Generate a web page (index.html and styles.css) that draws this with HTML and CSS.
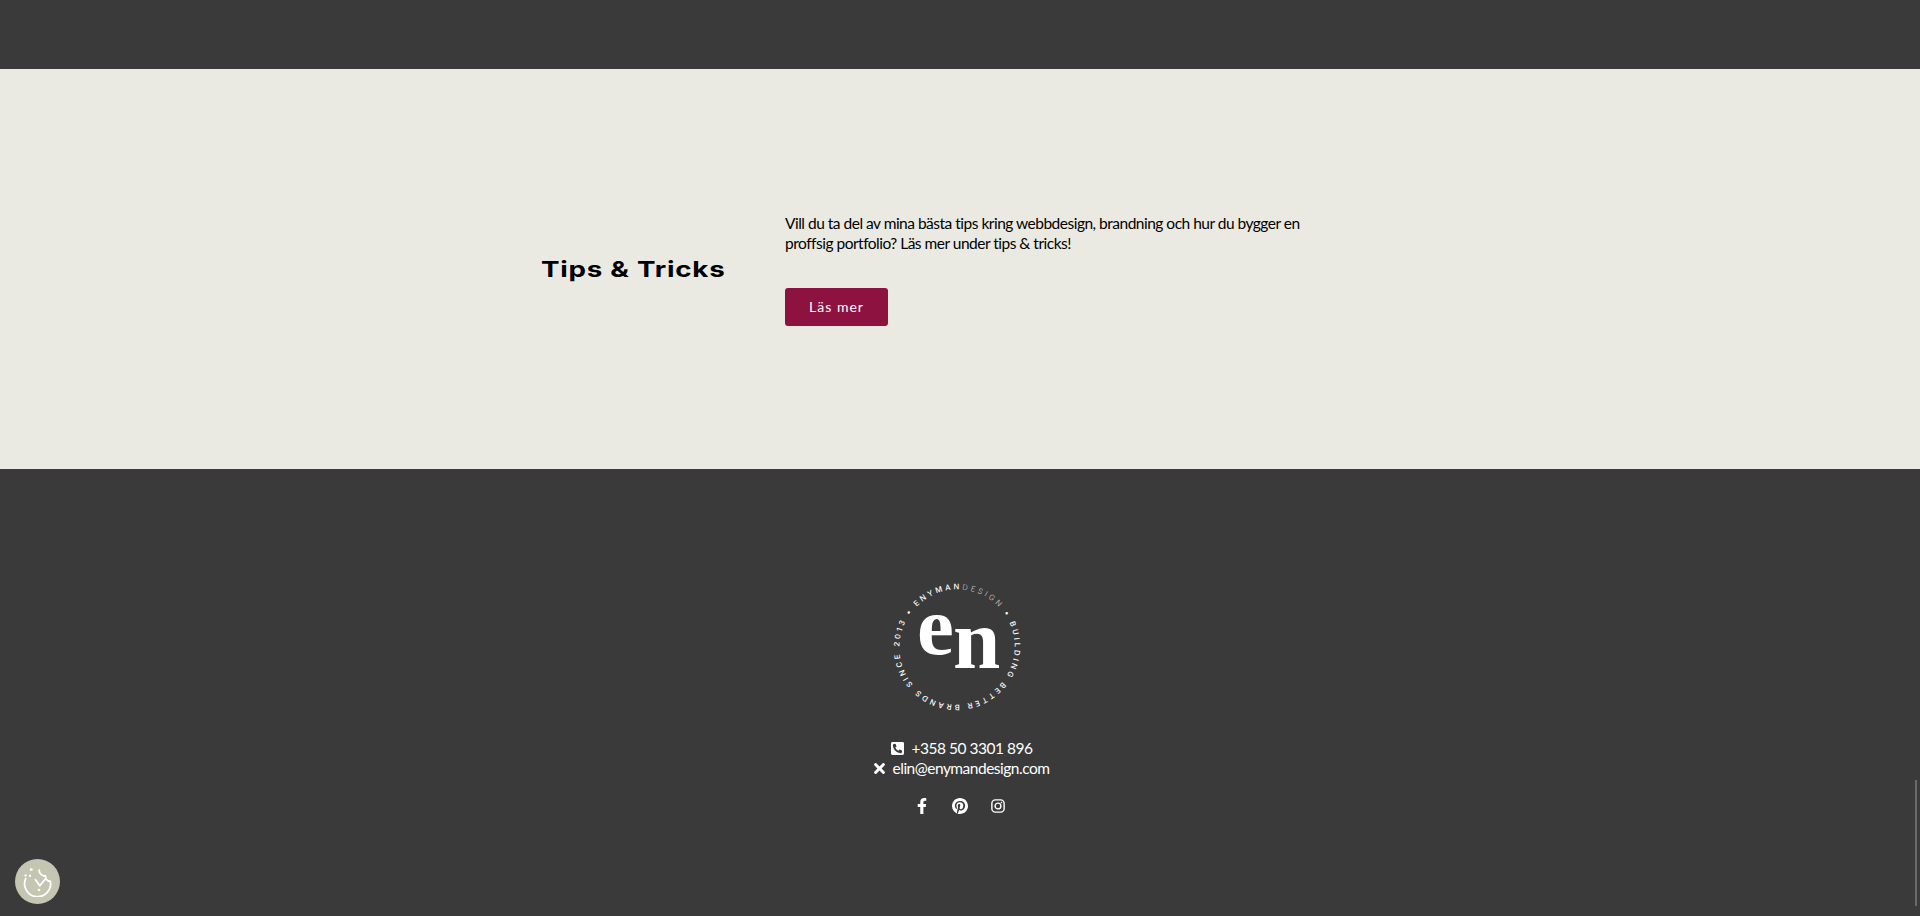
FILE: index.html
```html
<!DOCTYPE html>
<html lang="sv">
<head>
<meta charset="utf-8">
<title>Enyman Design</title>
<link rel="stylesheet" href="styles.css">
</head>
<body>
<div class="top-strip"></div>
<section class="tips">
  <div class="tips-head"><h2 class="tips-title">Tips &amp; Tricks</h2></div>
  <div class="tips-body">
    <p class="tips-text">Vill du ta del av mina bästa tips kring webbdesign, brandning och hur du bygger en proffsig portfolio? Läs mer under tips &amp; tricks!</p>
    <a class="btn" href="#">Läs mer</a>
  </div>
</section>
<footer class="footer">
  <svg class="logo" width="130" height="130" viewBox="-65 -65 130 130" role="img" aria-label="Enyman Design">
    <defs><path id="ring" d="M -40.3 -40.3 A 57 57 0 1 1 40.3 40.3 A 57 57 0 1 1 -40.3 -40.3"/></defs>
    <text class="ring-text"><textPath href="#ring">ENYMAN<tspan class="ring-light">DESIGN</tspan> • BUILDING BETTER BRANDS SINCE 2013 •</textPath></text>
    <text class="logo-e" x="-40" y="7">e</text>
    <text class="logo-n" x="-4" y="21">n</text>
  </svg>
  <ul class="contact">
    <li class="contact-row">
      <svg class="ico ico-phone" viewBox="0 32 448 448"><path d="M400 32H48A48 48 0 0 0 0 80v352a48 48 0 0 0 48 48h352a48 48 0 0 0 48-48V80a48 48 0 0 0-48-48zm-16.39 307.37l-15 65A15 15 0 0 1 354 416C194 416 64 286.29 64 126a15.7 15.7 0 0 1 11.63-14.61l65-15A18.23 18.23 0 0 1 144 96a16.27 16.27 0 0 1 13.79 9.09l30 70A17.9 17.9 0 0 1 189 181a17 17 0 0 1-5.5 11.61l-37.89 31a231.91 231.91 0 0 0 110.78 110.78l31-37.89A17 17 0 0 1 299 291a17.85 17.85 0 0 1 5.91 1.21l70 30A16.25 16.25 0 0 1 384 336a17.41 17.41 0 0 1-.39 3.37z"/></svg>
      <span>+358 50 3301 896</span>
    </li>
    <li class="contact-row">
      <svg class="ico ico-x" viewBox="0 80 352 352"><path d="M242.72 256l100.07-100.07c12.28-12.28 12.28-32.19 0-44.48l-22.24-22.24c-12.28-12.28-32.19-12.28-44.48 0L176 189.28 75.93 89.21c-12.28-12.28-32.19-12.28-44.48 0L9.21 111.45c-12.28 12.28-12.28 32.19 0 44.48L109.28 256 9.21 356.07c-12.28 12.28-12.28 32.19 0 44.48l22.24 22.24c12.28 12.28 32.2 12.28 44.48 0L176 322.72l100.07 100.07c12.28 12.28 32.2 12.28 44.48 0l22.24-22.24c12.28-12.28 12.28-32.19 0-44.48L242.72 256z"/></svg>
      <span>elin@enymandesign.com</span>
    </li>
  </ul>
  <div class="social">
    <a href="#" class="social-link" aria-label="Facebook"><svg class="ico-fb" viewBox="0 0 320 512"><path d="M279.14 288l14.22-92.66h-88.91v-60.13c0-25.35 12.42-50.06 52.24-50.06h40.42V6.26S260.43 0 225.36 0c-73.22 0-121.08 44.38-121.08 124.72v70.62H22.89V288h81.39v224h100.17V288z"/></svg></a>
    <a href="#" class="social-link" aria-label="Pinterest"><svg class="ico-pin" viewBox="0 8 496 496"><path d="M496 256c0 137-111 248-248 248-25.6 0-50.2-3.9-73.4-11.1 10.1-16.5 25.2-43.5 30.8-65 3-11.6 15.4-59 15.4-59 8.1 15.4 31.7 28.5 56.8 28.5 74.8 0 128.7-68.8 128.7-154.3 0-81.9-66.9-143.2-152.9-143.2-107 0-163.9 71.8-163.9 150.1 0 36.4 19.4 81.7 50.3 96.1 4.7 2.2 7.2 1.2 8.3-3.3.8-3.4 5-20.3 6.9-28.1.6-2.5.3-4.7-1.7-7.1-10.1-12.5-18.3-35.3-18.3-56.6 0-54.7 41.4-107.6 112-107.6 60.9 0 103.6 41.5 103.6 100.9 0 67.1-33.9 113.6-78 113.6-24.3 0-42.6-20.1-36.7-44.8 7-29.5 20.5-61.3 20.5-82.6 0-19-10.2-34.9-31.4-34.9-24.9 0-44.9 25.7-44.9 60.2 0 22 7.4 36.8 7.4 36.8s-24.5 103.8-29 123.2c-5 21.4-3 51.6-.9 71.2C65.4 450.9 0 361.1 0 256 0 119 111 8 248 8s248 111 248 248z"/></svg></a>
    <a href="#" class="social-link" aria-label="Instagram"><svg class="ico-ig" viewBox="0 0 24 24"><rect x="1.5" y="1.5" width="21" height="21" rx="6"/><circle cx="12" cy="12" r="5"/><circle class="ig-dot" cx="18" cy="6" r="1.4"/></svg></a>
  </div>
</footer>
<button class="cookie" aria-label="Cookies">
  <svg width="30" height="30" viewBox="0 0 30 30">
    <path d="M2.7 11.5A13 13 0 1 0 27.4 14.5C24 14 22.5 11.5 22.5 9C19 9 16 6.5 16.2 3.2"/>
    <path d="M12.5 12.8l4.3 6 5.7-7"/>
    <circle class="cookie-dot" cx="8.2" cy="2.4" r="1.5"/>
    <circle class="cookie-dot" cx="2.6" cy="8.4" r="1.2"/>
    <circle class="cookie-dot" cx="7" cy="8.8" r="1.2"/>
    <circle class="cookie-dot" cx="16" cy="23" r="1.3"/>
  </svg>
</button>
<div class="scroll-thumb"></div>
</body>
</html>
```
FILE: styles.css
```css
* { box-sizing: border-box; }
html, body { margin: 0; padding: 0; }
body {
  height: 916px;
  overflow: hidden;
  background: #3a3a3a;
  font-family: Lato, "Liberation Sans", sans-serif;
  font-size: 15.5px;
  letter-spacing: -0.5px;
  color: #fff;
}
.top-strip { height: 69px; background: #3a3a3a; }
.tips {
  height: 400px;
  background: #ebeae2;
  color: #000;
  display: flex;
  align-items: center;
  padding-left: 541px;
}
.tips-head { width: 244px; }
.tips-title {
  display: inline-block;
  margin: 0;
  font-family: Inter, sans-serif;
  font-weight: 700;
  font-size: 22px;
  letter-spacing: 0.6px;
  line-height: 30px;
  white-space: nowrap;
  transform: scaleX(1.26);
  transform-origin: left center;
}
.tips-body { width: 522px; }
.tips-text { margin: 0 0 35px; line-height: 20px; }
.btn {
  display: flex;
  align-items: center;
  justify-content: center;
  width: 103px;
  height: 38px;
  background: #8e1240;
  color: #fff;
  border-radius: 3px;
  font-size: 14px;
  letter-spacing: 1px;
  text-decoration: none;
}
.footer {
  display: flex;
  flex-direction: column;
  align-items: center;
  padding-top: 113px;
}
.logo { display: block; margin-right: 7px; overflow: visible; }
.ring-text { font-family: Inter, sans-serif; font-size: 7.6px; font-weight: 500; letter-spacing: 2.7px; fill: #fff; }
.ring-light { fill: #c8c8c8; font-weight: 300; }
.logo-e { font-family: "Liberation Serif", serif; font-weight: 700; font-size: 83px; fill: #fff; letter-spacing: 0; }
.logo-n { font-family: "Liberation Serif", serif; font-weight: 700; font-size: 85px; fill: #fff; letter-spacing: 0; }
.contact { list-style: none; margin: 26px 0 0; padding: 0 0 0 3px; text-align: center; }
.contact-row { display: flex; align-items: center; justify-content: center; gap: 8px; height: 20px; line-height: 20px; }
.ico { display: block; fill: #fff; }
.ico-phone { width: 13px; height: 13px; }
.ico-x { width: 11px; height: 11px; }
.social { display: flex; align-items: center; gap: 22px; margin-top: 18px; height: 20px; }
.social-link { display: flex; width: 16px; justify-content: center; }
.ico-fb { width: 10px; height: 16px; fill: #fff; }
.ico-pin { width: 16px; height: 16px; fill: #fff; }
.ico-ig { width: 14px; height: 14px; fill: none; stroke: #fff; stroke-width: 2.4; }
.ig-dot { fill: #fff; stroke: none; }
.cookie {
  position: fixed;
  left: 15px;
  top: 859px;
  width: 45px;
  height: 45px;
  border: 0;
  padding: 0;
  border-radius: 50%;
  background: #c5c6b2;
  display: flex;
  align-items: center;
  justify-content: center;
}
.cookie svg { fill: none; stroke: #fff; stroke-width: 1.8; stroke-linecap: round; stroke-linejoin: round; }
.cookie-dot { fill: #fff; stroke: none; }
.scroll-thumb {
  position: fixed;
  left: 1915px;
  top: 780px;
  width: 2px;
  height: 126px;
  background: #6a6a6a;
}
```
